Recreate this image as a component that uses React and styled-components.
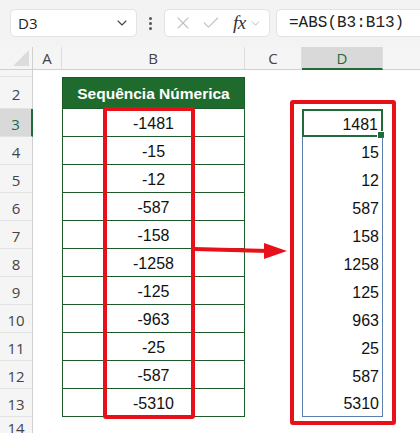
import React from 'react';
import styled, { createGlobalStyle } from 'styled-components';
import { ChevronDown, X, Check } from 'lucide-react';

const GlobalStyle = createGlobalStyle`
  html, body { margin: 0; padding: 0; background: #fff; }
  body { font-family: "Open Sans", "Liberation Sans", sans-serif; }
`;

const Page = styled.div`
  width: 420px;
  height: 433px;
  overflow: hidden;
  position: relative;
  display: flex;
  flex-direction: column;
  background: #fff;
`;

const Toolbar = styled.div`
  height: 47px;
  flex: none;
  background: #f3f3f3;
  display: flex;
  align-items: flex-start;
  padding: 9px 0 0 10px;
  box-sizing: border-box;
  overflow: hidden;
`;

const Box = styled.div`
  height: 28px;
  width: ${({ w }) => w};
  background: #fff;
  border: 1px solid #e3e3e3;
  border-radius: 5px;
  box-sizing: border-box;
  display: flex;
  align-items: center;
  flex: none;
  margin-left: ${({ gap }) => gap || '0px'};
`;

const NameText = styled.span`
  font-family: "Open Sans", sans-serif;
  font-size: 15px;
  color: #222;
  padding-left: 7px;
  flex: 1;
`;

const Dots = styled.div`
  width: 27px;
  flex: none;
  display: flex;
  flex-direction: column;
  align-items: center;
  gap: 2px;
  padding-top: 8px;
  span {
    width: 3px;
    height: 3px;
    background: #555;
    border-radius: 50%;
  }
`;

const Fx = styled.span`
  font-family: "Liberation Serif", serif;
  font-style: italic;
  font-size: 19px;
  color: #333;
  margin-left: 12px;
  letter-spacing: -0.5px;
`;

const Formula = styled.span`
  font-family: "Liberation Mono", monospace;
  font-size: 16px;
  color: #222;
  padding-left: 12px;
  white-space: nowrap;
`;

const Sheet = styled.div`
  display: grid;
  grid-template-columns: 33px 29px 183px 57px 81px 60px;
  grid-template-rows: 23px 7px 32px repeat(11, 28px) 20px;
  font-family: "Liberation Sans", Arial, sans-serif;
`;

const ColHead = styled.div`
  background: ${({ active }) => (active ? '#d9d9d9' : '#f5f5f5')};
  color: ${({ active }) => (active ? '#1e6b3a' : '#444')};
  border-right: 1px solid #dedede;
  border-bottom: ${({ active }) => (active ? '2px solid #1f6b3a' : '1px solid #d0d0d0')};
  box-sizing: border-box;
  display: flex;
  align-items: center;
  justify-content: center;
  font-family: "Open Sans", sans-serif;
  font-size: 15px;
`;

const Corner = styled.div`
  background: #f5f5f5;
  border-right: 1px solid #d0d0d0;
  border-bottom: 1px solid #d0d0d0;
  box-sizing: border-box;
  position: relative;
  &::after {
    content: '';
    position: absolute;
    right: 3px;
    bottom: 3px;
    border-left: 16px solid transparent;
    border-bottom: 16px solid #dcdcdc;
  }
`;

const RowHead = styled.div`
  background: ${({ active }) => (active ? '#d9d9d9' : '#f5f5f5')};
  color: ${({ active }) => (active ? '#1e6b3a' : '#444')};
  border-right: ${({ active }) => (active ? '2px solid #1f6b3a' : '1px solid #d0d0d0')};
  border-bottom: 1px solid #e2e2e2;
  box-sizing: border-box;
  display: flex;
  align-items: center;
  justify-content: center;
  padding-top: 3px;
  font-family: "Open Sans", sans-serif;
  font-size: 15px;
  overflow: hidden;
`;

const Blank = styled.div`
  background: #fff;
`;

const TableHead = styled.div`
  background: #1f6b2e;
  color: #fff;
  font-weight: bold;
  font-size: 15.5px;
  display: flex;
  align-items: center;
  justify-content: center;
  border: 1px solid #1a5a27;
  padding-top: 2px;
  box-sizing: border-box;
`;

const TableCell = styled.div`
  border-left: 1px solid #1e5b2a;
  border-right: 1px solid #1e5b2a;
  border-bottom: 1px solid #1e5b2a;
  box-sizing: border-box;
  display: flex;
  align-items: center;
  justify-content: center;
  font-size: 16px;
  color: #111;
  padding-top: 2px;
`;

const ResultCell = styled.div`
  border-left: ${({ active }) => (active ? '2px solid #1f6b3a' : '1px solid #5a7fb0')};
  border-right: ${({ active }) => (active ? '2px solid #1f6b3a' : '1px solid #5a7fb0')};
  border-top: ${({ active }) => (active ? '2px solid #1f6b3a' : 'none')};
  border-bottom: ${({ active, last }) =>
    active ? '2px solid #1f6b3a' : last ? '1px solid #5a7fb0' : 'none'};
  box-sizing: border-box;
  display: flex;
  align-items: center;
  justify-content: flex-end;
  padding: 3px 3px 0 0;
  font-size: 16px;
  color: #111;
  position: relative;
`;

const Handle = styled.span`
  position: absolute;
  right: -4px;
  bottom: -4px;
  width: 6px;
  height: 6px;
  background: #1f6b3a;
  border: 1px solid #fff;
`;

const RedBox = styled.div`
  position: absolute;
  left: ${({ x }) => x}px;
  top: ${({ y }) => y}px;
  width: ${({ w }) => w}px;
  height: ${({ h }) => h}px;
  border: 4px solid #e8111a;
  border-radius: 3px;
  box-sizing: border-box;
  pointer-events: none;
`;

const ArrowSvg = styled.svg`
  position: absolute;
  left: 190px;
  top: 238px;
`;

const values = [-1481, -15, -12, -587, -158, -1258, -125, -963, -25, -587, -5310];
const cols = ['A', 'B', 'C', 'D', 'E'];

export default function App() {
  return (
    <Page>
      <GlobalStyle />
      <Toolbar>
        <Box w="127px">
          <NameText>D3</NameText>
          <ChevronDown size={16} color="#444" strokeWidth={1.6} style={{ marginRight: 6 }} />
        </Box>
        <Dots>
          <span />
          <span />
          <span />
        </Dots>
        <Box w="106px">
          <X size={20} color="#c2c2c2" strokeWidth={1.3} style={{ marginLeft: 8 }} />
          <Check size={20} color="#c2c2c2" strokeWidth={1.3} style={{ marginLeft: 8 }} />
          <Fx>fx</Fx>
          <ChevronDown size={13} color="#aaa" strokeWidth={1.5} style={{ marginLeft: 3 }} />
        </Box>
        <Box w="160px" gap="6px">
          <Formula>=ABS(B3:B13)</Formula>
        </Box>
      </Toolbar>
      <Sheet>
        <Corner />
        {cols.map((c) => (
          <ColHead key={c} active={c === 'D'}>
            {c === 'E' ? '' : c}
          </ColHead>
        ))}

        <RowHead />
        <Blank /><Blank /><Blank /><Blank /><Blank />

        <RowHead>2</RowHead>
        <Blank />
        <TableHead>Sequência Númerica</TableHead>
        <Blank /><Blank /><Blank />

        {values.map((v, i) => (
          <React.Fragment key={i}>
            <RowHead active={i === 0}>{i + 3}</RowHead>
            <Blank />
            <TableCell>{v}</TableCell>
            <Blank />
            <ResultCell active={i === 0} last={i === values.length - 1}>
              {Math.abs(v)}
              {i === 0 && <Handle />}
            </ResultCell>
            <Blank />
          </React.Fragment>
        ))}

        <RowHead>14</RowHead>
      </Sheet>

      <RedBox x={103} y={107} w={92} h={312} />
      <RedBox x={290} y={100} w={106} h={325} />
      <ArrowSvg width="100" height="26" viewBox="0 0 100 26">
        <line x1="4" y1="11" x2="78" y2="13" stroke="#e8111a" strokeWidth="4" />
        <polygon points="74,5 97,13 74,21" fill="#e8111a" />
      </ArrowSvg>
    </Page>
  );
}
